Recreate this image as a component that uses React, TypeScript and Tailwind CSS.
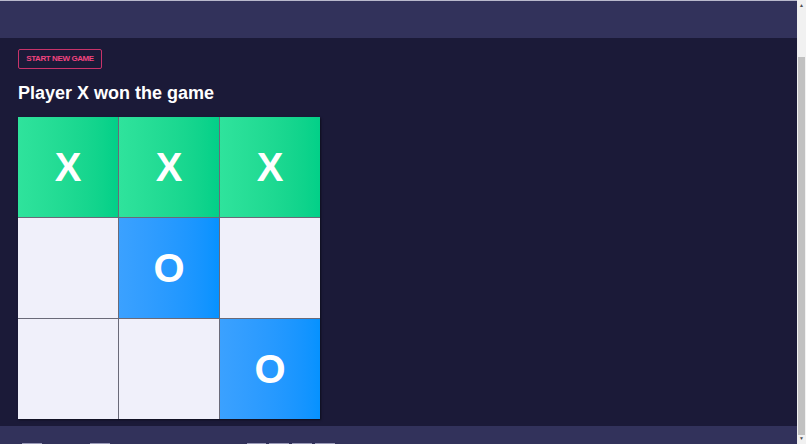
const BOARD = ["X", "X", "X", "", "O", "", "", "", "O"];

function Cell({ value }: { value: string }) {
  const bg =
    value === "X"
      ? "bg-gradient-to-r from-[#2fe39c] to-[#02d088]"
      : value === "O"
        ? "bg-gradient-to-r from-[#3ba1ff] to-[#0592ff]"
        : "bg-[#f0f0fa]";
  return (
    <div
      className={`${bg} h-[100px] flex items-center justify-center text-white text-[40px] font-bold`}
    >
      {value}
    </div>
  );
}

function Scrollbar() {
  return (
    <div className="w-[9px] bg-[#f1f1f1] flex flex-col">
      <div className="h-[17px] flex items-start justify-center pt-[3px] text-[5px] leading-none text-[#505050]">
        ▲
      </div>
      <div className="h-[40px]" />
      <div className="flex-1 bg-[#c1c1c1] mx-[1px]" />
      <div className="h-[9px] flex items-end justify-center pb-[3px] text-[5px] leading-none text-[#505050]">
        ▼
      </div>
    </div>
  );
}

export default function App() {
  return (
    <div className="h-[444px] overflow-hidden flex bg-[#1b1a38] font-['Liberation_Sans',Arial,sans-serif]">
      <div className="flex-1 flex flex-col">
        <div className="h-px bg-[#b9b9cc]" />
        <header className="h-[37px] bg-[#32325b]" />

        <main className="px-[18px] pt-[11px] pb-[7px]">
          <button className="block h-[20px] w-[84px] border border-[#c8336a] rounded-[2px] text-[#f0447f] text-[8px] font-bold uppercase tracking-[-0.4px]">
            Start new game
          </button>
          <h1 className="mt-[13px] text-white text-[18px] font-bold leading-[22px]">
            Player X won the game
          </h1>
          <div className="mt-[13px] w-[302px] grid grid-cols-3 gap-px bg-[#6a6a78] shadow-[1px_1px_2px_rgba(0,0,0,0.5)]">
            {BOARD.map((v, i) => (
              <Cell key={i} value={v} />
            ))}
          </div>
        </main>

        <footer className="flex-1 bg-[#32325b] flex items-end px-[22px]">
          <div className="flex items-end h-px w-full">
            <div className="h-px w-[20px] bg-[#9a9ab8]" />
            <div className="h-px w-[20px] bg-[#9a9ab8] ml-[48px]" />
            <div className="h-px w-[19px] bg-[#9a9ab8] ml-[137px]" />
            <div className="h-px w-[20px] bg-[#9a9ab8] ml-[3px]" />
            <div className="h-px w-[20px] bg-[#9a9ab8] ml-[3px]" />
            <div className="h-px w-[20px] bg-[#9a9ab8] ml-[3px]" />
          </div>
        </footer>
      </div>
      <Scrollbar />
    </div>
  );
}
